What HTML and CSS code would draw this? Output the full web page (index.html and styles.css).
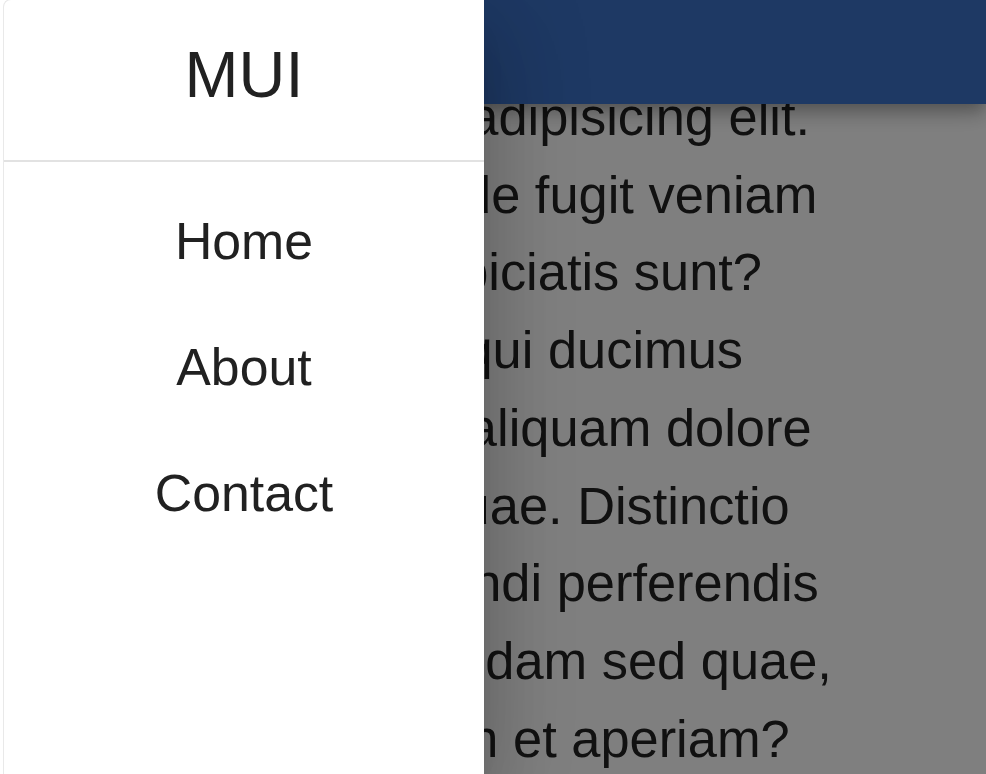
FILE: index.html
```html
<!DOCTYPE html>
<html lang="en">
<head>
<meta charset="utf-8">
<title>MUI</title>
<link rel="stylesheet" href="styles.css">
</head>
<body>
  <header class="appbar">
    <div class="toolbar"></div>
  </header>
  <main class="main">
    <p class="lorem">Lorem ipsum dolor sit amet consectetur adipisicing elit. Similique unde fugit veniam eius, perspiciatis sunt? Corporis qui ducimus quibusdam, aliquam dolore excepturi quae. Distinctio enim at eligendi perferendis in cum quibusdam sed quae, accusantium et aperiam?</p>
  </main>
  <div class="backdrop"></div>
  <nav class="drawer">
    <div class="drawer-title">MUI</div>
    <hr class="divider">
    <ul class="nav-list">
      <li class="nav-item">Home</li>
      <li class="nav-item">About</li>
      <li class="nav-item">Contact</li>
    </ul>
  </nav>
</body>
</html>
```

FILE: styles.css
```css
html, body {
  margin: 0;
  padding: 0;
  height: 100%;
  overflow: hidden;
  background: #ffffff;
  font-family: "Liberation Sans", Arial, Helvetica, sans-serif;
  color: rgba(0, 0, 0, 0.87);
}

.appbar {
  position: fixed;
  top: 0;
  left: 0;
  right: 0;
  height: 104px;
  background: #3c72c8;
  box-shadow: 0 6px 13px -3px rgba(0, 0, 0, 0.2),
              0 13px 16px 0 rgba(0, 0, 0, 0.14),
              0 3px 32px 0 rgba(0, 0, 0, 0.12);
  z-index: 2;
}

.toolbar {
  height: 100%;
}

.main {
  margin-top: 1px;
}

.lorem {
  margin: 0 0 0 155px;
  width: 684px;
  font-size: 52.4px;
  line-height: 77.75px;
  text-align: center;
  color: #222222;
}

.backdrop {
  position: fixed;
  inset: 0;
  background: rgba(0, 0, 0, 0.5);
  z-index: 3;
}

.drawer {
  position: fixed;
  top: 0;
  left: 0;
  bottom: 0;
  width: 484px;
  background: #ffffff;
  z-index: 4;
  box-shadow: 0 26px 32px -16px rgba(0, 0, 0, 0.2),
              0 51px 77px 6px rgba(0, 0, 0, 0.14),
              0 19px 96px 16px rgba(0, 0, 0, 0.12);
}

.drawer::before {
  content: "";
  position: absolute;
  left: 3px;
  top: -1px;
  bottom: 0;
  width: 10px;
  border-left: 1px solid #e9e9e9;
  border-top: 1px solid #e9e9e9;
  border-top-left-radius: 8px;
}

.drawer-title {
  padding: 23px 0 33px 4px;
  font-size: 64.8px;
  line-height: 104px;
  text-align: center;
  color: #212121;
}

.divider {
  margin: 0 0 0 4px;
  border: 0;
  height: 2px;
  background: #e2e2e2;
}

.nav-list {
  list-style: none;
  margin: 0;
  padding: 16px 0 0 4px;
}

.nav-item {
  padding: 24px 0;
  font-size: 51.8px;
  line-height: 78px;
  text-align: center;
  color: #212121;
}
```
